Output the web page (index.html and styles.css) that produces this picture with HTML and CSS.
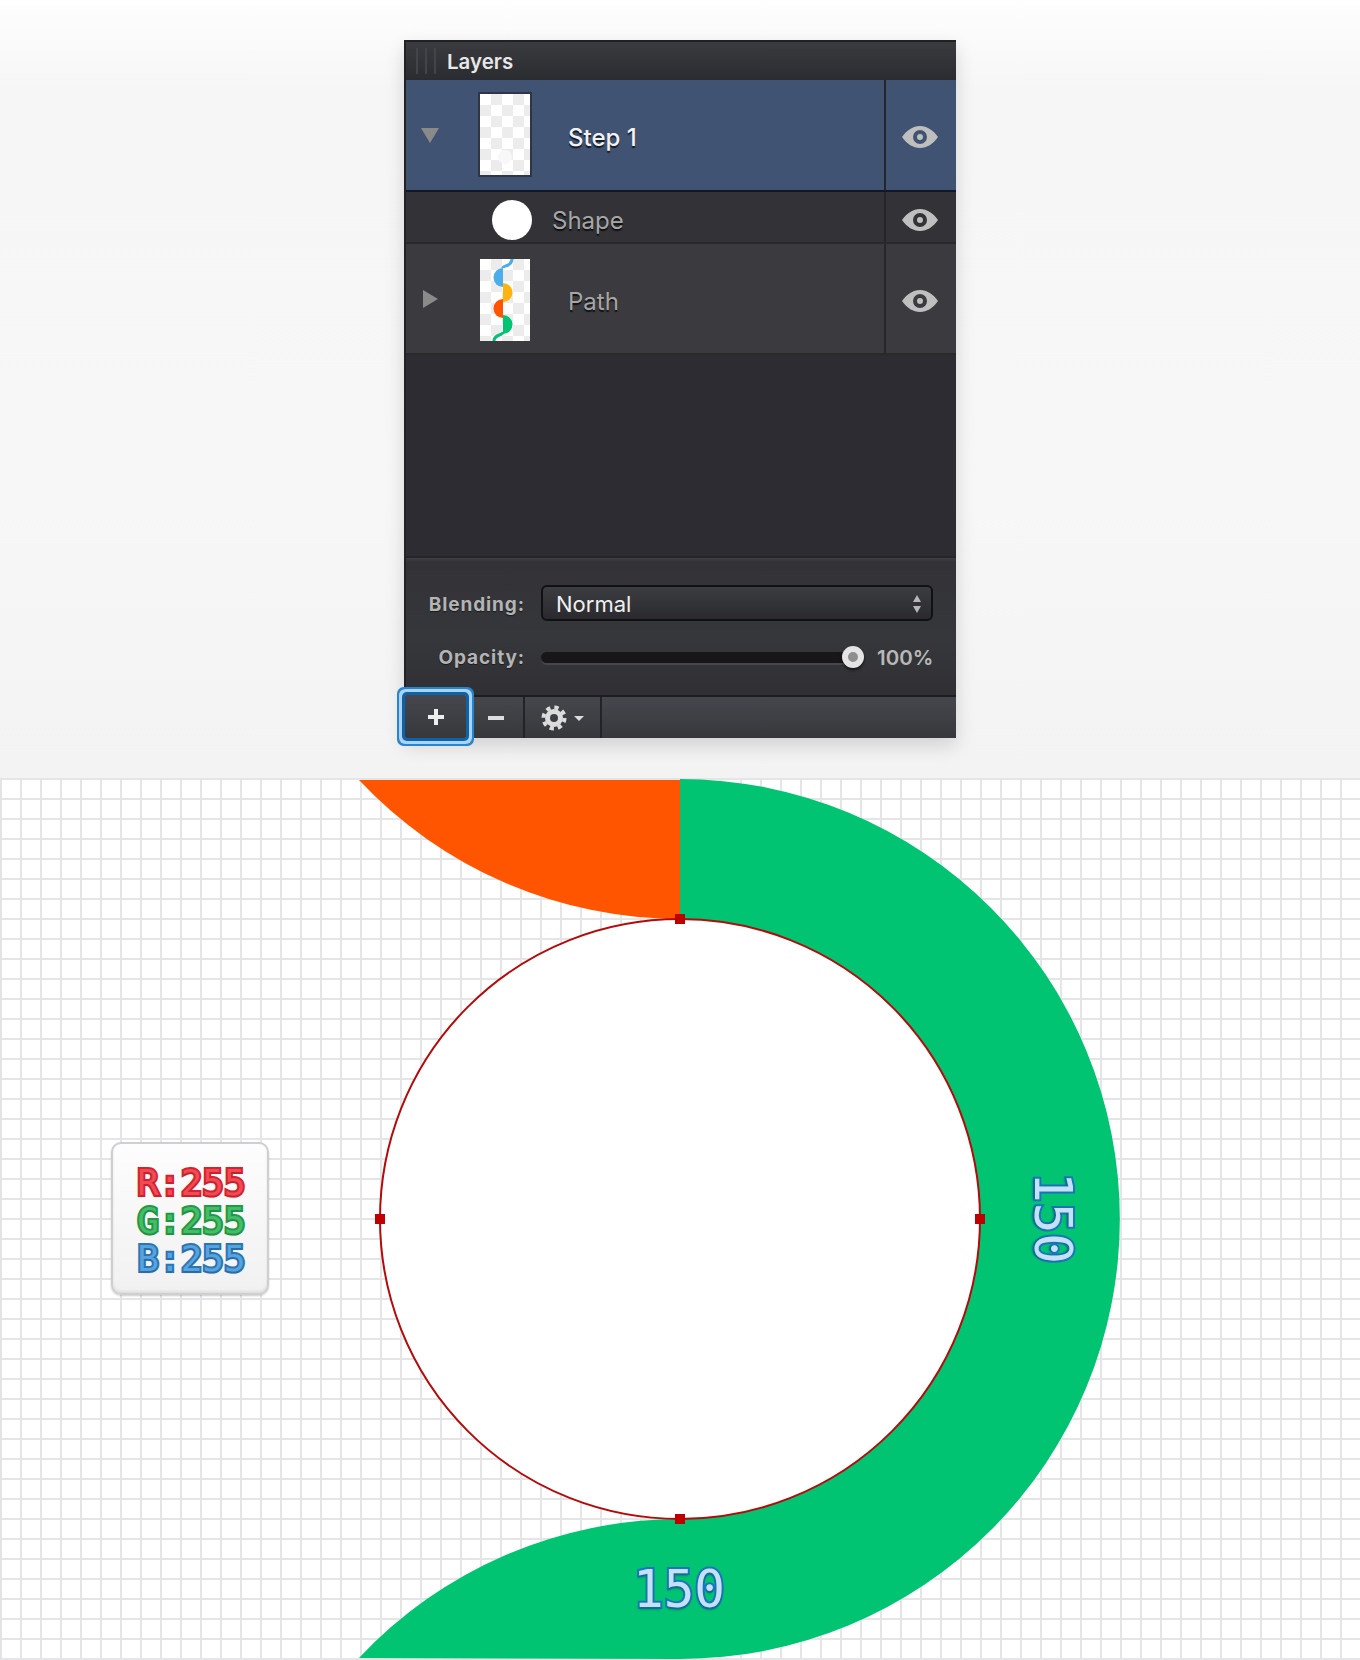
FILE: index.html
```html
<!DOCTYPE html>
<html lang="en">
<head>
  <meta charset="UTF-8" />
  <title>Layers panel</title>
  <link rel="stylesheet" href="styles.css">
</head>
<body>

  <svg class="defs" width="0" height="0">
    <symbol id="eye" viewBox="0 0 36 22">
      <path fill-rule="evenodd" d="M0 11C5 4 11 0 18 0s13 4 18 11c-5 7-11 11-18 11S5 18 0 11zM18 4a7 7 0 1 0 0 14a7 7 0 1 0 0-14zM18 8a3 3 0 1 1 0 6a3 3 0 1 1 0-6z"/>
    </symbol>
  </svg>

  <div class="top">
    <div class="panel">
      <div class="title-bar">
        <div class="grip"><span></span><span></span><span></span></div>
        <div class="title">Layers</div>
      </div>

      <div class="row row-selected">
        <div class="row-main">
          <div class="arrow-col arrow-col-first"><div class="arrow-down"></div></div>
          <div class="thumb thumb-step"><div class="thumb-dot"></div></div>
          <div class="name name-step">Step 1</div>
        </div>
        <div class="eye-col"><svg class="eye" width="36" height="22"><use href="#eye"/></svg></div>
      </div>

      <div class="row row-shape">
        <div class="row-main">
          <div class="shape-dot"></div>
          <div class="name name-shape">Shape</div>
        </div>
        <div class="eye-col"><svg class="eye" width="36" height="22"><use href="#eye"/></svg></div>
      </div>

      <div class="row row-path">
        <div class="row-main">
          <div class="arrow-col"><div class="arrow-right"></div></div>
          <div class="thumb thumb-path">
            <svg width="50" height="82" viewBox="0 0 50 82">
              <path d="M32 0c0 8-9 6-9 9" fill="none" stroke="#4badea" stroke-width="3"/>
              <path d="M23 9a9.500 9.500 0 0 0 0 19z" fill="#4badea"/>
              <path d="M23 24a9.500 9.500 0 0 1 0 19z" fill="#ffb311"/>
              <path d="M23 40a9.500 9.500 0 0 0 0 19z" fill="#ff5500"/>
              <path d="M23 56a9.500 9.500 0 0 1 0 19z" fill="#00c471"/>
              <path d="M23 73c0 4-9 2-9 9" fill="none" stroke="#00c471" stroke-width="3"/>
            </svg>
          </div>
          <div class="name name-path">Path</div>
        </div>
        <div class="eye-col"><svg class="eye" width="36" height="22"><use href="#eye"/></svg></div>
      </div>

      <div class="empty"></div>

      <div class="footer">
        <div class="label label-blend">Blending:</div>
        <div class="select">
          <span>Normal</span>
          <div class="stepper"><i class="up"></i><i class="down"></i></div>
        </div>
        <div class="label">Opacity:</div>
        <div class="slider-row">
          <div class="track"><div class="knob"></div></div>
          <div class="percent">100%</div>
        </div>
      </div>

      <div class="toolbar">
        <div class="tool tool-add">
          <svg width="18" height="18" viewBox="0 0 18 18"><path d="M9 1v16M1 9h16" stroke="#eee" stroke-width="4"/></svg>
        </div>
        <div class="tool tool-remove">
          <svg width="18" height="4" viewBox="0 0 18 4"><path d="M1 2h16" stroke="#ddd" stroke-width="4"/></svg>
        </div>
        <div class="tool tool-gear">
          <svg width="26" height="26" viewBox="0 0 26 26">
            <circle cx="13" cy="13" r="6.500" fill="none" stroke="#dcdcdc" stroke-width="5"/>
            <circle cx="13" cy="13" r="10.500" fill="none" stroke="#dcdcdc" stroke-width="4" stroke-dasharray="4.250 4"/>
          </svg>
          <div class="caret"></div>
        </div>
      </div>
    </div>
  </div>

  <div class="canvas">
    <svg class="art" width="1360" height="882" viewBox="0 778 1360 882">
      <path d="M359 780H680V919A440 440 0 0 1 359 780Z" fill="#ff5500"/>
      <path d="M680 779A440 440 0 0 1 680 1659L359 1658A440 440 0 0 1 680 1519Z" fill="#00c471"/>
      <circle cx="680" cy="1219" r="300" fill="#fff" stroke="#b50a0a" stroke-width="2"/>
      <rect x="675" y="914" width="10" height="10" fill="#c00000"/>
      <rect x="675" y="1514" width="10" height="10" fill="#c00000"/>
      <rect x="375" y="1214" width="10" height="10" fill="#c00000"/>
      <rect x="975" y="1214" width="10" height="10" fill="#c00000"/>
    </svg>

    <div class="rgb-badge">
      <div class="rgb rgb-r">R:255</div>
      <div class="rgb rgb-g">G:255</div>
      <div class="rgb rgb-b">B:255</div>
    </div>

    <div class="size size-right">150</div>
    <div class="size size-bottom">150</div>
  </div>

</body>
</html>
```

FILE: styles.css
```css
body {
  margin: 0;
  font-family: Inter, Roboto, Arial, sans-serif;
  background-color: #fff;
}

.defs {
  display: block;
  height: 0;
}

.top {
  height: 778px;
  padding-top: 40px;
  box-sizing: border-box;
  background: linear-gradient(#fefefe, #f6f6f6 90px, #f7f7f7 500px, #f3f3f3);
}

.panel {
  width: 552px;
  height: 698px;
  margin: 0 auto;
  box-sizing: border-box;
  border-left: 2px solid #232325;
  display: flex;
  flex-direction: column;
  box-shadow: 0 8px 18px rgba(0,0,0,0.14);
}

.title-bar {
  height: 40px;
  flex: none;
  box-sizing: border-box;
  border-top: 2px solid #212123;
  background: linear-gradient(#3a3b3f, #2b2c2f);
  display: flex;
  align-items: center;
}

.grip {
  width: 41px;
  padding-left: 10px;
  box-sizing: border-box;
  display: flex;
  gap: 7px;
  align-self: stretch;
  padding-top: 6px;
  padding-bottom: 6px;
}

.grip span {
  width: 2px;
  background: #43444a;
}

.title {
  font-size: 20.500px;
  font-weight: 600;
  color: #e8e8e8;
}

.row {
  display: flex;
  flex: none;
  box-sizing: border-box;
}

.row-main {
  flex: 1;
  display: flex;
  align-items: center;
  padding-top: 5px;
}

.eye-col {
  width: 72px;
  box-sizing: border-box;
  padding-top: 5px;
  padding-right: 3px;
  border-left: 2px solid #26262a;
  display: flex;
  align-items: center;
  justify-content: center;
  fill: #bfbfbf;
}

.eye {
  display: block;
}

.row-selected {
  height: 112px;
  background: #415373;
  border-bottom: 2px solid #13172a;
}

.row-selected .row-main,
.row-selected .eye-col {
  padding-top: 6px;
  padding-bottom: 3px;
}

.row-shape {
  height: 52px;
  background: #333337;
  border-bottom: 2px solid #29292c;
}

.row-path {
  height: 111px;
  background: #3b3b3f;
  border-bottom: 2px solid #29292c;
}

.arrow-col {
  width: 74px;
  padding-left: 17px;
  box-sizing: border-box;
}

.arrow-col-first {
  width: 72px;
  padding-left: 15px;
}

.arrow-down {
  width: 0;
  height: 0;
  border-left: 9px solid transparent;
  border-right: 9px solid transparent;
  border-top: 15px solid #8a8a8a;
  margin-top: -2px;
}

.arrow-right {
  width: 0;
  height: 0;
  border-top: 9px solid transparent;
  border-bottom: 9px solid transparent;
  border-left: 15px solid #8a8a8a;
  margin-top: -4px;
}

.thumb {
  background-color: #fff;
  background-image: conic-gradient(#ececec 25%, #fff 0 50%, #ececec 0 75%, #fff 0);
  background-size: 22px 22px;
  box-sizing: border-box;
  position: relative;
}

.thumb-step {
  width: 54px;
  height: 85px;
  border: 2px solid #2e3547;
  margin-top: -4px;
}

.thumb-dot {
  position: absolute;
  left: 18px;
  top: 56px;
  width: 14px;
  height: 14px;
  border-radius: 50%;
  background: #f8f8f8;
}

.thumb-path {
  width: 50px;
  height: 82px;
  margin-top: -2px;
}

.thumb-path svg {
  display: block;
}

.shape-dot {
  width: 40px;
  height: 40px;
  margin-left: 86px;
  border-radius: 50%;
  background: #fff;
}

.name {
  font-size: 24px;
  text-shadow: 0 2px 1px rgba(0,0,0,0.7);
}

.name-step {
  margin-left: 36px;
  margin-top: 2px;
  color: #f2f2f2;
  font-weight: 500;
}

.name-shape {
  margin-left: 20px;
  margin-top: 2px;
  color: #a6a6a6;
}

.name-path {
  margin-left: 38px;
  color: #a6a6a6;
}

.empty {
  height: 201px;
  flex: none;
  background: #2c2c32;
}

.footer {
  height: 139px;
  flex: none;
  box-sizing: border-box;
  padding: 27px 23px 0 0;
  border-top: 2px solid #25252a;
  background: linear-gradient(#3e3e43, #323237 4px, #36373b 60%, #2f2f34);
  display: grid;
  grid-template-columns: 119px 1fr;
  column-gap: 16px;
  row-gap: 25px;
  grid-template-rows: 36px 22px;
  align-items: center;
}

.label {
  text-align: right;
  font-size: 19px;
  font-weight: 700;
  letter-spacing: 0.9px;
  color: #b4b4b4;
  text-shadow: 0 1px 1px rgba(0,0,0,0.5);
}

.label-blend {
  margin-top: 3px;
}

.select {
  height: 36px;
  box-sizing: border-box;
  border: 2px solid #111114;
  border-radius: 6px;
  background: linear-gradient(#3c3d41, #2a2a2e);
  display: flex;
  align-items: center;
  justify-content: space-between;
  padding: 2px 10px 0 13px;
  font-size: 22px;
  color: #efefef;
}

.stepper {
  display: flex;
  flex-direction: column;
  gap: 4px;
}

.stepper i {
  display: block;
  width: 0;
  height: 0;
  border-left: 4px solid transparent;
  border-right: 4px solid transparent;
}

.stepper .up {
  border-bottom: 7px solid #b8b8b8;
}

.stepper .down {
  border-top: 7px solid #b8b8b8;
}

.slider-row {
  display: flex;
  align-items: center;
  gap: 24px;
}

.track {
  flex: 1;
  height: 11px;
  border-radius: 6px;
  background: #17171a;
  box-shadow: 0 2px 0 #46464b;
  position: relative;
}

.knob {
  position: absolute;
  right: -11px;
  top: -6px;
  width: 22px;
  height: 22px;
  border-radius: 50%;
  box-sizing: border-box;
  border: 6px solid #e4e4e4;
  background: #8e8e8e;
  box-shadow: 0 2px 3px rgba(0,0,0,0.6);
}

.percent {
  width: 56px;
  flex: none;
  text-align: right;
  font-size: 20.500px;
  font-weight: 600;
  color: #b8b8b8;
}

.toolbar {
  height: 43px;
  flex: none;
  box-sizing: border-box;
  border-top: 2px solid #1d1d20;
  background: linear-gradient(#46474c, #37383c);
  display: flex;
}

.tool {
  display: flex;
  align-items: center;
  justify-content: center;
  box-sizing: border-box;
  border-right: 2px solid #232326;
}

.tool-add {
  width: 61px;
  height: 43px;
  margin: -2px 0 0 -1px;
  border: none;
  border-radius: 2px;
  background: linear-gradient(#46474c, #37383c);
  box-shadow: 0 0 0 3px #0e62aa, 0 0 0 6px #a9d3f7, 0 0 0 8px #2a84cc;
  position: relative;
}

.tool-remove {
  width: 59px;
  padding-left: 2px;
}

.tool-gear {
  width: 77px;
  gap: 7px;
}

.caret {
  width: 0;
  height: 0;
  border-left: 5px solid transparent;
  border-right: 5px solid transparent;
  border-top: 5px solid #dcdcdc;
  margin-top: 2px;
}

.canvas {
  height: 882px;
  position: relative;
  overflow: hidden;
  background-color: #fff;
  background-image:
    linear-gradient(#e5e5e7 2px, transparent 2px),
    linear-gradient(90deg, #e5e5e7 2px, transparent 2px);
  background-size: 20px 20px;
  background-position: 0 0, -1px 0;
  border-left: 1px solid #e3e3e5;
  box-sizing: border-box;
}

.art {
  display: block;
  position: absolute;
  left: -1px;
  top: 0;
}

.rgb-badge {
  position: absolute;
  left: 110px;
  top: 364px;
  width: 158px;
  height: 153px;
  box-sizing: border-box;
  padding: 20px 0 0 3px;
  border: 2px solid #cfcfcf;
  border-radius: 10px;
  background: linear-gradient(#fdfdfd, #f1f1f1);
  box-shadow: inset 0 -2px 3px rgba(0,0,0,0.08), 0 1px 2px rgba(0,0,0,0.2);
  display: flex;
  flex-direction: column;
  align-items: center;
}

.rgb {
  height: 38px;
  line-height: 38px;
  font-family: "DejaVu Sans Mono", monospace;
  font-size: 36px;
  font-weight: 400;
  paint-order: stroke fill;
  -webkit-text-stroke: 4px;
}

.rgb-r {
  color: #f04a54;
  -webkit-text-stroke-color: #d6222e;
  text-shadow: 0 2px 1px rgba(160,40,40,0.35);
}

.rgb-g {
  color: #45bd68;
  -webkit-text-stroke-color: #1f9a45;
  text-shadow: 0 2px 1px rgba(40,130,70,0.35);
}

.rgb-b {
  color: #57a3de;
  -webkit-text-stroke-color: #2a76b4;
  text-shadow: 0 2px 1px rgba(40,90,150,0.35);
}

.size {
  position: absolute;
  width: 120px;
  height: 54px;
  line-height: 54px;
  text-align: center;
  font-family: "DejaVu Sans Mono", monospace;
  font-size: 51px;
  color: #c5e1fa;
  paint-order: stroke fill;
  -webkit-text-stroke: 4px #1a75bc;
  text-shadow: 0 3px 2px rgba(0,90,90,0.35);
}

.size-bottom {
  left: 618px;
  top: 785px;
}

.size-right {
  left: 991px;
  top: 413px;
  transform: rotate(90deg);
}
```
